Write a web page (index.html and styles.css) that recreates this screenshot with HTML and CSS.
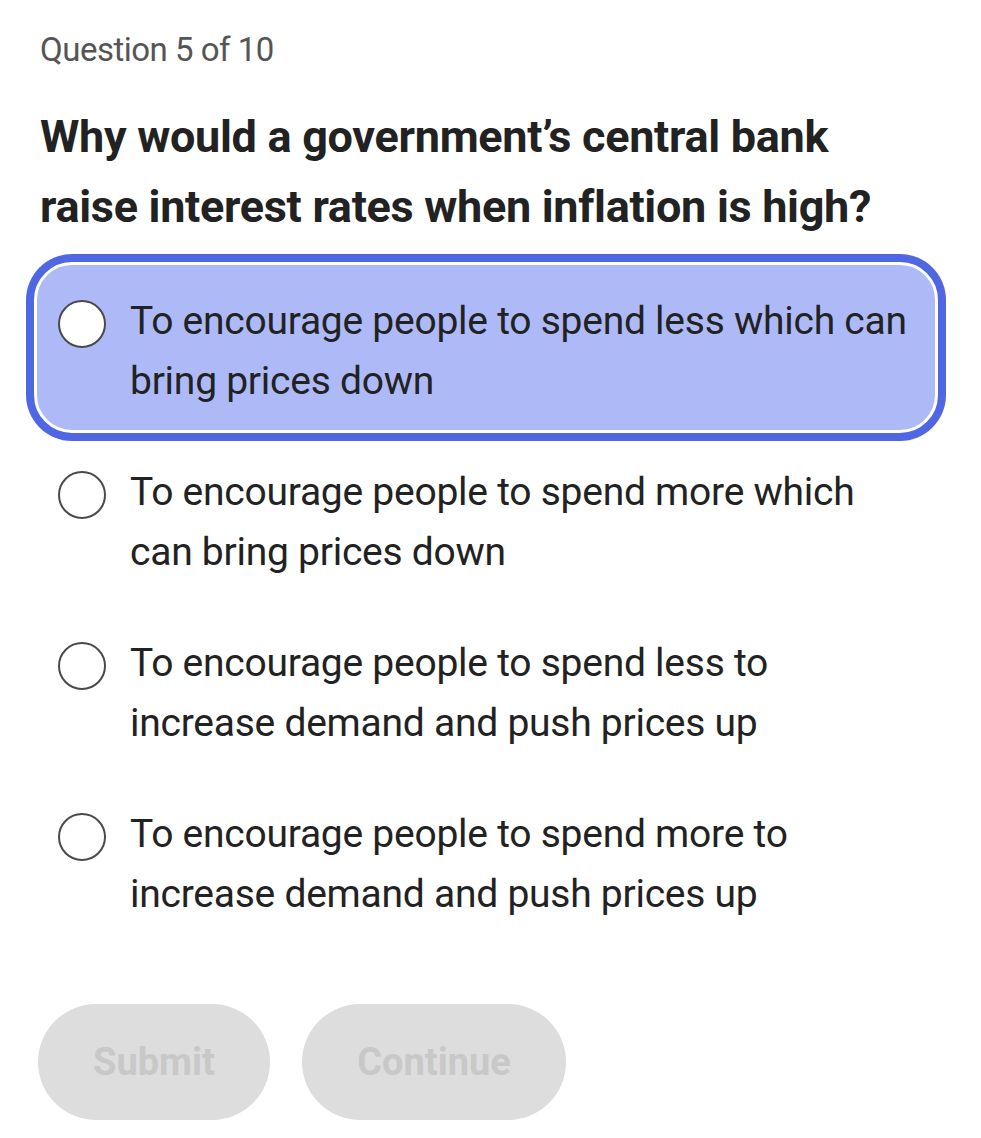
FILE: index.html
```html
<!DOCTYPE html>
<html>
<head>
<meta charset="utf-8">
<link rel="stylesheet" href="styles.css">
</head>
<body>
<div class="page">
  <div class="counter">Question 5 of 10</div>
  <h1 class="question">Why would a government’s central bank raise interest rates when inflation is high?</h1>
  <div class="options">
    <div class="option selected">
      <span class="radio"></span>
      <span class="label">To encourage people to spend less which can bring prices down</span>
    </div>
    <div class="option">
      <span class="radio"></span>
      <span class="label">To encourage people to spend more which can bring prices down</span>
    </div>
    <div class="option">
      <span class="radio"></span>
      <span class="label">To encourage people to spend less to increase demand and push prices up</span>
    </div>
    <div class="option">
      <span class="radio"></span>
      <span class="label">To encourage people to spend more to increase demand and push prices up</span>
    </div>
  </div>
  <div class="actions">
    <button class="btn btn-submit">Submit</button>
    <button class="btn btn-continue">Continue</button>
  </div>
</div>
</body>
</html>
```
FILE: styles.css
```css
html, body {
  margin: 0;
  padding: 0;
  background: #ffffff;
}
.page {
  width: 981px;
  height: 1138px;
  box-sizing: border-box;
  padding: 28px 0 0 40px;
  font-family: Roboto, "Liberation Sans", sans-serif;
  color: #222222;
}
.counter {
  font-size: 33px;
  line-height: 44px;
  color: #555555;
  letter-spacing: -0.5px;
}
.question {
  margin: 30px 0 0 0;
  width: 880px;
  font-size: 45px;
  line-height: 70px;
  font-weight: 700;
  color: #222222;
  letter-spacing: -0.3px;
}
.options {
  margin: 20px 0 0 -6px;
  display: flex;
  flex-direction: column;
  width: 904px;
}
.option {
  display: flex;
  align-items: flex-start;
  gap: 24px;
  padding: 26px 20px 19px 21px;
  border-radius: 38px;
  border: 3px solid transparent;
}
.option.selected {
  background: #aebaf7;
  border-color: #ffffff;
  box-shadow: 0 0 0 8px #5067e3;
}
.radio {
  flex: 0 0 auto;
  width: 44px;
  height: 44px;
  margin-top: 9px;
  border: 2px solid #4a4a4a;
  border-radius: 50%;
}
.option.selected .radio {
  background: #ffffff;
}
.label {
  max-width: 790px;
  font-size: 39px;
  line-height: 60px;
  color: #222222;
  letter-spacing: -0.25px;
}
.actions {
  margin-top: 58px;
  display: flex;
  gap: 32px;
  margin-left: -2px;
}
.btn {
  height: 116px;
  border: none;
  border-radius: 58px;
  background: #dddddd;
  color: #c8c8c8;
  font-family: Roboto, "Liberation Sans", sans-serif;
  font-size: 38px;
  font-weight: 700;
  padding: 0;
}
.btn-submit {
  width: 232px;
}
.btn-continue {
  width: 264px;
}
```
